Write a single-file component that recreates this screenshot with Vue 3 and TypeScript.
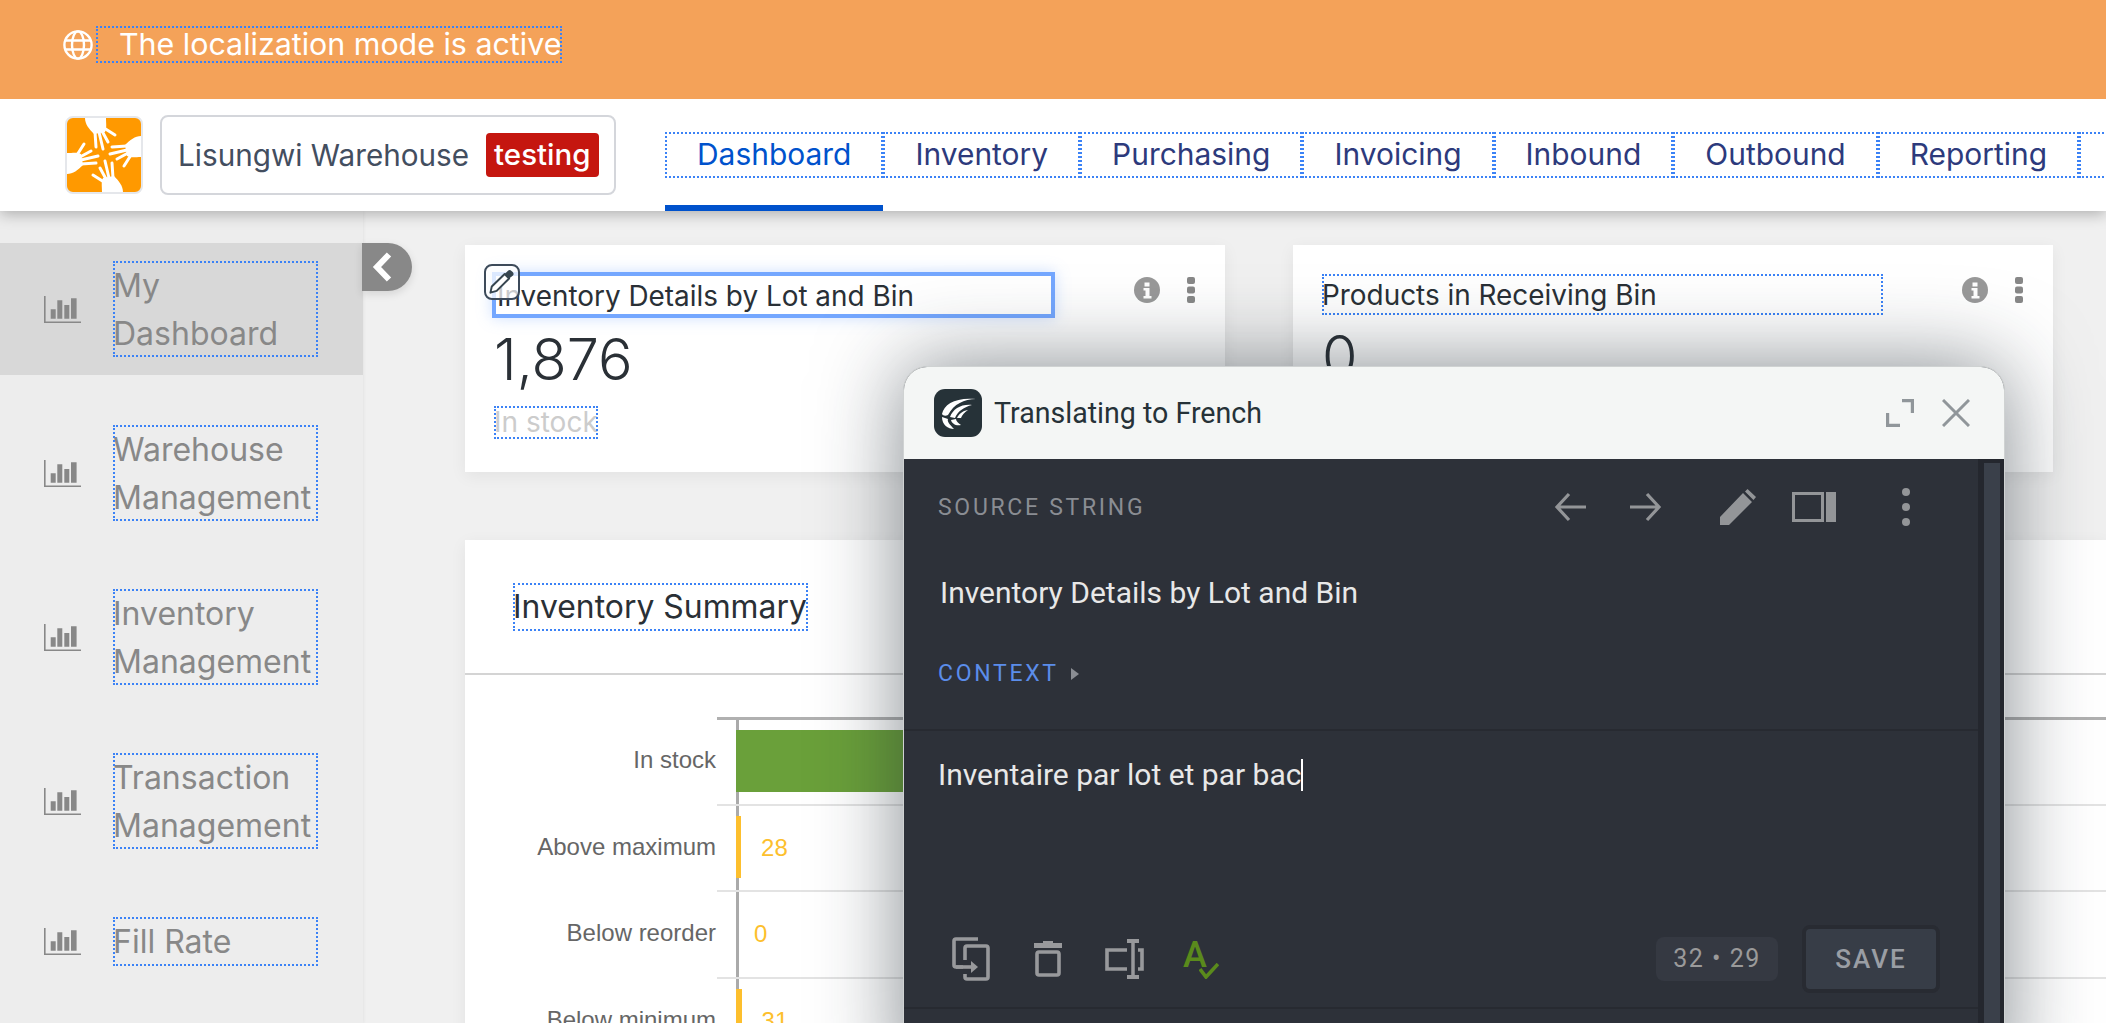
<template>
  <div class="page">
    <div class="banner">
      <svg class="globe" viewBox="0 0 30 30" fill="none" stroke="#fff" stroke-width="2.4">
        <circle cx="15" cy="15" r="13.6" />
        <ellipse cx="15" cy="15" rx="6" ry="13.6" />
        <path d="M2 10.5h26M2 19.5h26" />
      </svg>
      <span class="banner-text dotted">The localization mode is active</span>
    </div>

    <header class="topbar">
      <div class="logo">
        <svg viewBox="0 0 74 74" width="74" height="74">
          <g v-for="r in [0, 90, 180, 270]" :key="r" :transform="`rotate(${r} 37 37)`">
            <path fill="#fff" d="M18 0h21c0 6 1 10-1 14l-11 2C22 11 18 6 18 0z" />
            <path
              fill="none"
              stroke="#fff"
              stroke-width="3"
              stroke-linecap="round"
              d="M37 10l11 7M35 13l6 11M32 14l4 17M28 14l1 15"
            />
          </g>
        </svg>
      </div>
      <div class="site">
        <span class="site-name">Lisungwi Warehouse</span>
        <span class="site-tag">testing</span>
      </div>
      <ul class="tabs">
        <li v-for="(t, i) in tabs" :key="t" class="tab" :class="{ active: i === 0 }">
          <span class="dotted">{{ t }}</span>
        </li>
        <li class="tab tab-empty"><span class="dotted">&nbsp;</span></li>
      </ul>
    </header>

    <div class="body">
      <aside class="sidebar">
        <div v-for="(s, i) in sideItems" :key="s" class="side-item" :class="{ active: i === 0 }">
          <svg class="side-icon" viewBox="0 0 37 27" fill="#888">
            <path d="M0 0h1.6v25.4H37V27H0z" />
            <path d="M6.7 13.3h5v9.4h-5zM13.3 4.3h5v18.4h-5zM20.3 9h5v13.7h-5zM27 2.3h5.6v20.4H27z" />
          </svg>
          <span class="side-text dotted">{{ s }}</span>
        </div>
      </aside>
      <button class="collapse">
        <svg viewBox="0 0 20 30" width="20" height="30" fill="none" stroke="#fff" stroke-width="6">
          <path d="M17 2.5 5 15l12 12.5" />
        </svg>
      </button>

      <main class="main">
        <div class="cards">
          <section class="card">
            <div class="card-head">
              <div class="card-title focused">Inventory Details by Lot and Bin</div>
              <svg class="info" viewBox="0 0 26 26">
                <circle cx="13" cy="13" r="13" fill="#999" />
                <path fill="#fff" d="M10.5 5.5h5v4h-5zM9.5 11h6v8h2v2.500h-8V19h2v-5.500h-2z" />
              </svg>
              <svg class="kebab" viewBox="0 0 10 26" fill="#888">
                <rect x="1" y="0" width="8" height="7" rx="2" />
                <rect x="1" y="9.500" width="8" height="7" rx="2" />
                <rect x="1" y="19" width="8" height="7" rx="2" />
              </svg>
            </div>
            <div class="card-value">1,876</div>
            <div class="card-sub"><span class="dotted">In stock</span></div>
            <button class="edit">
              <svg viewBox="0 0 36 36" width="32" height="32">
                <path d="M5 30l1.500-7L21 9l5 5-14 14z" fill="#fff" stroke="#36454f" stroke-width="2.200" stroke-linejoin="round" />
                <path d="M21 9l3.500-3.500a3 3 0 0 1 4.200 0l1.300 1.300a3 3 0 0 1 0 4.200L26 14z" fill="#36454f" />
              </svg>
            </button>
          </section>
          <section class="card">
            <div class="card-head">
              <div class="card-title dotted">Products in Receiving Bin</div>
              <svg class="info" viewBox="0 0 26 26">
                <circle cx="13" cy="13" r="13" fill="#999" />
                <path fill="#fff" d="M10.5 5.5h5v4h-5zM9.5 11h6v8h2v2.500h-8V19h2v-5.500h-2z" />
              </svg>
              <svg class="kebab" viewBox="0 0 10 26" fill="#888">
                <rect x="1" y="0" width="8" height="7" rx="2" />
                <rect x="1" y="9.500" width="8" height="7" rx="2" />
                <rect x="1" y="19" width="8" height="7" rx="2" />
              </svg>
            </div>
            <div class="card-value">0</div>
          </section>
        </div>

        <section class="summary">
          <div class="summary-head"><span class="summary-title dotted">Inventory Summary</span></div>
          <div class="chart">
            <div v-for="(r, i) in rows" :key="r.label" class="row">
              <div class="row-label">{{ r.label }}</div>
              <div class="row-plot" :class="{ first: i === 0 }">
                <div class="row-cell">
                  <div
                    class="bar"
                    :class="{ filled: r.value > 0 }"
                    :style="{ width: r.value * 0.18 + 'px', background: r.color }"
                  ></div>
                  <span class="bar-value">{{ r.value }}</span>
                </div>
              </div>
            </div>
          </div>
        </section>
      </main>

      <div class="dialog">
        <div class="dlg-head">
          <svg class="dlg-logo" viewBox="0 0 48 48">
            <rect width="48" height="48" rx="11" fill="#263238" />
            <g fill="#fff">
              <path d="M8 25C10 15 22 8 42 10 30 10 20 15 14 26c-2 1-5 1-6-1z" />
              <path d="M16 28c3-8 11-13 22-12-8 2-14 6-17 13z" />
              <path d="M23 29c2-4 5-7 11-8-4 3-6 5-7 8z" />
              <path d="M8 28c0 8 6 12 12 12-5-5-7-8-6-10z" />
              <path d="M17 31c1 4 5 6 10 5-3-2-5-4-5-6z" />
            </g>
          </svg>
          <span class="dlg-title">Translating to French</span>
          <svg class="dlg-expand" viewBox="0 0 28 28" fill="none" stroke="#90969a" stroke-width="3.200">
            <path d="M16 1.600h10.400V14M1.600 14v12.400H14" />
          </svg>
          <svg class="dlg-close" viewBox="0 0 28 28" fill="none" stroke="#90969a" stroke-width="3">
            <path d="M1 1l26 26M27 1 1 27" />
          </svg>
        </div>

        <div class="dlg-body">
          <div class="dlg-main">
            <div class="src-bar">
              <span class="caps">SOURCE STRING</span>
              <div class="src-tools">
                <svg class="t-arrow" viewBox="0 0 32 32" fill="none" stroke="#939598" stroke-width="3.200">
                  <path d="M32 16H3M15 3 3 16l12 13" />
                </svg>
                <svg class="t-arrow t-next" viewBox="0 0 32 32" fill="none" stroke="#939598" stroke-width="3.200">
                  <path d="M0 16h29M17 3l12 13-12 13" />
                </svg>
                <svg class="t-pencil" viewBox="0 0 36 36" fill="#939598">
                  <path d="M0 36v-8L23 4l9 9-23 23zM25 2.500 27.500 0l8.500 8-2.500 3z" />
                </svg>
                <svg class="t-panel" viewBox="0 0 44 30" fill="#939598">
                  <path d="M0 0h32v30H0zm3 3v24h26V3zM34 0h10v30H34z" fill-rule="evenodd" />
                </svg>
                <svg class="t-dots" viewBox="0 0 8 38" fill="#939598">
                  <circle cx="4" cy="4" r="4" />
                  <circle cx="4" cy="19" r="4" />
                  <circle cx="4" cy="34" r="4" />
                </svg>
              </div>
            </div>
            <div class="src-text">Inventory Details by Lot and Bin</div>
            <div class="context">
              <span class="caps blue">CONTEXT</span>
              <svg viewBox="0 0 8 12" width="8" height="12" fill="#8a8d93"><path d="M0 0l8 6-8 6z" /></svg>
            </div>

            <div class="editor">
              <div class="edit-text">Inventaire par lot et par bac<i class="caret"></i></div>
              <div class="edit-bar">
                <svg class="i-copy" viewBox="0 0 38 44" fill="none" stroke="#98999c" stroke-width="3.600">
                  <path d="M26 2H4a2 2 0 0 0-2 2v24a2 2 0 0 0 2 2h7" />
                  <path d="M13 23V11a2 2 0 0 1 2-2h19a2 2 0 0 1 2 2v29a2 2 0 0 1-2 2H15a2 2 0 0 1-2-2v-3" />
                  <path d="M4 30h16" />
                  <path d="M19 24l7 6-7 6z" fill="#98999c" stroke="none" />
                </svg>
                <svg class="i-trash" viewBox="0 0 28 36" fill="none" stroke="#98999c" stroke-width="3.600">
                  <path d="M0 4.500h28" stroke-width="5" />
                  <path d="M9 1.500h10" stroke-width="3" />
                  <rect x="3" y="11" width="22" height="23" rx="2" />
                </svg>
                <svg class="i-cursor" viewBox="0 0 39 40" fill="none" stroke="#98999c" stroke-width="3.600">
                  <path d="M22 11H2v19h20M33 11h4v19h-4" />
                  <path d="M28 3v34" stroke-width="3.500" />
                  <path d="M22 2h12M22 38h12" stroke-width="4" />
                </svg>
                <span class="i-spell">
                  <span class="i-spell-a">A</span>
                  <svg viewBox="0 0 20 16" width="20" height="16" fill="none" stroke="#5a8a1c" stroke-width="3.600">
                    <path d="M1 6l6 8L19 1" />
                  </svg>
                </span>
                <span class="count">32 • 29</span>
                <button class="save">SAVE</button>
              </div>
            </div>
          </div>
          <div class="scroll"><div class="thumb"></div></div>
        </div>
      </div>
    </div>
  </div>
</template>

<script setup lang="ts">
interface Row {
  label: string
  value: number
  color: string
}

const tabs: string[] = ['Dashboard', 'Inventory', 'Purchasing', 'Invoicing', 'Inbound', 'Outbound', 'Reporting']

const sideItems: string[] = [
  'My Dashboard',
  'Warehouse Management',
  'Inventory Management',
  'Transaction Management',
  'Fill Rate',
]

const rows: Row[] = [
  { label: 'In stock', value: 1876, color: '#6aa03a' },
  { label: 'Above maximum', value: 28, color: '#fdbf2d' },
  { label: 'Below reorder', value: 0, color: '#fdbf2d' },
  { label: 'Below minimum', value: 31, color: '#fdbf2d' },
]
</script>

<style>
html,
body {
  margin: 0;
  overflow: hidden;
}
</style>

<style scoped>
.page {
  width: 2106px;
  height: 1023px;
  overflow: hidden;
  background: #f0f0f0;
  font-family: Inter, 'Liberation Sans', sans-serif;
  display: flex;
  flex-direction: column;
}
.dotted {
  outline: 2px dotted #3b82f6;
  outline-offset: -2px;
}

.banner {
  height: 99px;
  flex: none;
  box-sizing: border-box;
  padding: 0 0 10px 63px;
  background: #f4a259;
  display: flex;
  align-items: center;
  color: #fff;
  position: relative;
  z-index: 3;
}
.globe {
  width: 30px;
  height: 30px;
}
.banner-text {
  margin-left: 3px;
  padding: 0 1px 0 23px;
  height: 37px;
  line-height: 36px;
  font-size: 30.400px;
}

.topbar {
  height: 112px;
  flex: none;
  background: #fff;
  display: flex;
  align-items: center;
  padding-left: 65px;
  box-shadow: 0 3px 14px rgba(0, 0, 0, 0.28);
  position: relative;
  z-index: 2;
}
.logo {
  width: 78px;
  height: 78px;
  box-sizing: border-box;
  border: 2px solid #e5e7eb;
  border-radius: 8px;
  background: #ff9900;
  overflow: hidden;
  flex: none;
}
.logo svg {
  display: block;
}
.site {
  margin-left: 17px;
  width: 456px;
  height: 80px;
  box-sizing: border-box;
  border: 2px solid #d4d6db;
  border-radius: 8px;
  display: flex;
  align-items: center;
  padding-left: 16px;
  flex: none;
}
.site-name {
  font-size: 29.700px;
  color: #434e5f;
}
.site-tag {
  margin-left: 17px;
  height: 44px;
  line-height: 42px;
  padding: 0 8px;
  border-radius: 4px;
  background: #c5160f;
  color: #fff;
  font-size: 29.500px;
  font-weight: 500;
}
.tabs {
  list-style: none;
  margin: 0 0 0 49px;
  padding: 0;
  display: flex;
  align-self: stretch;
  flex: none;
}
.tab {
  display: flex;
  align-items: center;
  color: #2d3a7c;
  font-size: 29.950px;
}
.tab span {
  display: block;
  height: 46px;
  line-height: 44px;
  padding: 0 32px;
  box-sizing: border-box;
}
.tab.active {
  color: #0052cc;
  box-shadow: inset 0 -6px 0 #0052cc;
}
.tab-empty span {
  width: 200px;
}

.body {
  flex: 1;
  display: flex;
  position: relative;
  min-height: 0;
}
.sidebar {
  width: 363px;
  flex: none;
  box-sizing: border-box;
  padding-top: 32px;
  background: #ededed;
  box-shadow: 1px 0 3px rgba(0, 0, 0, 0.05);
  display: flex;
  flex-direction: column;
  gap: 32px;
}
.side-item {
  display: flex;
  align-items: center;
  gap: 32px;
  padding: 18px 0 18px 44px;
  color: #888;
}
.side-item.active {
  background: #d8d8d8;
}
.side-icon {
  width: 37px;
  height: 27px;
  flex: none;
}
.side-text {
  width: 205px;
  box-sizing: border-box;
  font-size: 32px;
  line-height: 47.500px;
  padding-top: 1px;
}
.collapse {
  position: absolute;
  left: 362px;
  top: 32px;
  width: 50px;
  height: 48px;
  padding: 0 0 0 4px;
  border: 0;
  border-radius: 0 24px 24px 0;
  background: #888;
  box-shadow: 0 3px 8px rgba(0, 0, 0, 0.12);
  display: flex;
  align-items: center;
  justify-content: flex-start;
}
.collapse svg {
  margin-left: 6px;
}

.main {
  flex: 1;
  min-width: 0;
  padding: 34px 0 0 102px;
}
.cards {
  display: flex;
  gap: 68px;
}
.card {
  width: 760px;
  height: 227px;
  background: #fff;
  box-shadow: 0 4px 16px rgba(0, 0, 0, 0.06);
  position: relative;
  color: #2a3036;
  flex: none;
}
.card-head {
  display: flex;
  align-items: flex-start;
  padding: 29px 0 0 29px;
}
.card-title {
  width: 561px;
  height: 41px;
  box-sizing: border-box;
  line-height: 42px;
  font-size: 27.900px;
  flex: none;
}
.focused {
  width: 563px;
  height: 46px;
  margin: -2px 0 0 -2px;
  line-height: 40px;
  padding-left: 1px;
  border: 4px solid #74a7ff;
  box-shadow: 0 0 14px rgba(116, 167, 255, 0.35);
}
.info {
  width: 26px;
  height: 26px;
  margin: 3px 0 0 79px;
  flex: none;
}
.kebab {
  width: 10px;
  height: 26px;
  margin: 3px 0 0 26px;
  flex: none;
}
.card-value {
  margin: 0 0 0 29px;
  font-size: 57.500px;
  font-weight: 300;
  line-height: 68px;
  margin-top: 7px;
}
.card-sub {
  margin: 13px 0 0 29px;
  color: #ccc;
  font-size: 28px;
  line-height: 33px;
}
.card-sub span {
  display: inline-block;
}
.edit {
  position: absolute;
  left: 19px;
  top: 19px;
  width: 36px;
  height: 36px;
  padding: 0;
  box-sizing: border-box;
  border: 2px solid #3c4a5a;
  border-radius: 8px;
  background: rgba(255, 255, 255, 0.75);
  display: flex;
  align-items: center;
  justify-content: center;
}

.summary {
  margin-top: 68px;
  background: #fff;
  height: 600px;
  box-shadow: 0 4px 16px rgba(0, 0, 0, 0.06);
  color: #2a3036;
}
.summary-head {
  height: 135px;
  box-sizing: border-box;
  border-bottom: 2px solid #d4d4d4;
  padding-left: 48px;
  display: flex;
  align-items: center;
}
.summary-title {
  height: 48px;
  line-height: 48px;
  font-size: 31.900px;
  padding-right: 1px;
}
.chart {
  padding-top: 42px;
  font-family: 'Liberation Sans', Arial, sans-serif;
  font-size: 24px;
}
.row {
  display: flex;
  height: 86.500px;
}
.row-label {
  width: 252px;
  box-sizing: border-box;
  padding-right: 1px;
  text-align: right;
  color: #666;
  line-height: 86px;
  flex: none;
}
.row-plot {
  flex: 1;
  border-top: 2px solid #e3e3e3;
  padding-left: 19px;
}
.row-plot.first {
  border-top: 3px solid #b0b0b0;
}
.row-cell {
  height: 100%;
  box-sizing: border-box;
  border-left: 3px solid #aaa;
  padding: 10px 0 12px;
  display: flex;
  align-items: stretch;
  gap: 18px;
  color: #fdbf2d;
}
.bar {
  margin-left: -3px;
  flex: none;
}
.bar.filled {
  margin-right: 2px;
}
.bar-value {
  line-height: 64px;
}

.dialog {
  position: absolute;
  left: 903px;
  top: 155px;
  width: 1102px;
  height: 720px;
  box-sizing: border-box;
  border: 1px solid #cfd2d2;
  border-bottom: 0;
  border-radius: 24px 24px 0 0;
  background: #2d3139;
  box-shadow: 0 0 85px rgba(30, 40, 50, 0.55);
  z-index: 3;
  font-family: Roboto, 'Liberation Sans', sans-serif;
}
.dlg-head {
  height: 92px;
  background: #f4f6f5;
  border-radius: 23px 23px 0 0;
  display: flex;
  align-items: center;
  padding-left: 30px;
}
.dlg-logo {
  width: 48px;
  height: 48px;
  flex: none;
}
.dlg-title {
  margin-left: 12px;
  font-size: 28.600px;
  color: #263238;
  flex: 1;
}
.dlg-expand {
  width: 28px;
  height: 28px;
  margin-right: 28px;
}
.dlg-close {
  width: 28px;
  height: 28px;
  margin-right: 34px;
}
.dlg-body {
  display: flex;
  height: 628px;
}
.dlg-main {
  flex: 1;
  min-width: 0;
  color: #e8e8e8;
}
.src-bar {
  height: 96px;
  display: flex;
  align-items: center;
  padding-left: 34px;
}
.caps {
  font-size: 23px;
  letter-spacing: 2.700px;
  color: #8a8d93;
}
.caps.blue {
  color: #5b8dea;
}
.src-tools {
  margin-left: auto;
  display: flex;
  align-items: center;
  margin-right: 68px;
}
.t-arrow {
  width: 32px;
  height: 32px;
}
.t-next {
  margin-left: 44px;
}
.t-pencil {
  width: 36px;
  height: 36px;
  margin-left: 58px;
}
.t-panel {
  width: 44px;
  height: 30px;
  margin-left: 36px;
}
.t-dots {
  width: 8px;
  height: 38px;
  margin-left: 66px;
}
.src-text {
  margin: 18px 0 0 36px;
  font-size: 30px;
  line-height: 40px;
}
.context {
  margin: 41px 0 0 34px;
  display: flex;
  align-items: center;
  gap: 12px;
  line-height: 40px;
}
.editor {
  margin-top: 35px;
  height: 280px;
  margin-right: -2px;
  box-sizing: border-box;
  border: 2px solid #272a31;
  border-left: 0;
  display: flex;
  flex-direction: column;
  justify-content: space-between;
  padding: 24px 0 18px 34px;
}
.edit-text {
  font-size: 30px;
  line-height: 40px;
  display: flex;
  align-items: center;
}
.caret {
  width: 2px;
  height: 32px;
  background: #fff;
}
.edit-bar {
  display: flex;
  align-items: center;
  padding-left: 14px;
  padding-right: 42px;
}
.i-copy {
  width: 38px;
  height: 44px;
  flex: none;
}
.i-trash {
  width: 28px;
  height: 36px;
  margin-left: 44px;
  flex: none;
}
.i-cursor {
  width: 39px;
  height: 40px;
  margin-left: 43px;
  flex: none;
}
.i-spell {
  width: 36px;
  height: 40px;
  margin-left: 39px;
  position: relative;
  flex: none;
}
.i-spell-a {
  position: absolute;
  left: 0;
  top: -4px;
  color: #5a8a1c;
  font-size: 36px;
  font-weight: 500;
  line-height: 40px;
}
.i-spell svg {
  position: absolute;
  right: 0;
  bottom: 0;
}
.count {
  margin-left: auto;
  width: 122px;
  height: 44px;
  line-height: 44px;
  text-align: center;
  border-radius: 8px;
  background: #353942;
  color: #9a9a9a;
  font-size: 25px;
  letter-spacing: 1.500px;
}
.save {
  margin: -4px -4px -4px 24px;
  width: 138px;
  height: 68px;
  box-sizing: border-box;
  border: 4px solid #282b32;
  border-radius: 8px;
  background: #373d47;
  color: #9a9ea4;
  font: 500 26px Roboto, 'Liberation Sans', sans-serif;
  letter-spacing: 2px;
}
.scroll {
  width: 26px;
  flex: none;
  background: #24272e;
  padding: 4px 4px 0 6px;
  box-sizing: border-box;
}
.thumb {
  width: 16px;
  height: 100%;
  background: #3a404a;
}
</style>
